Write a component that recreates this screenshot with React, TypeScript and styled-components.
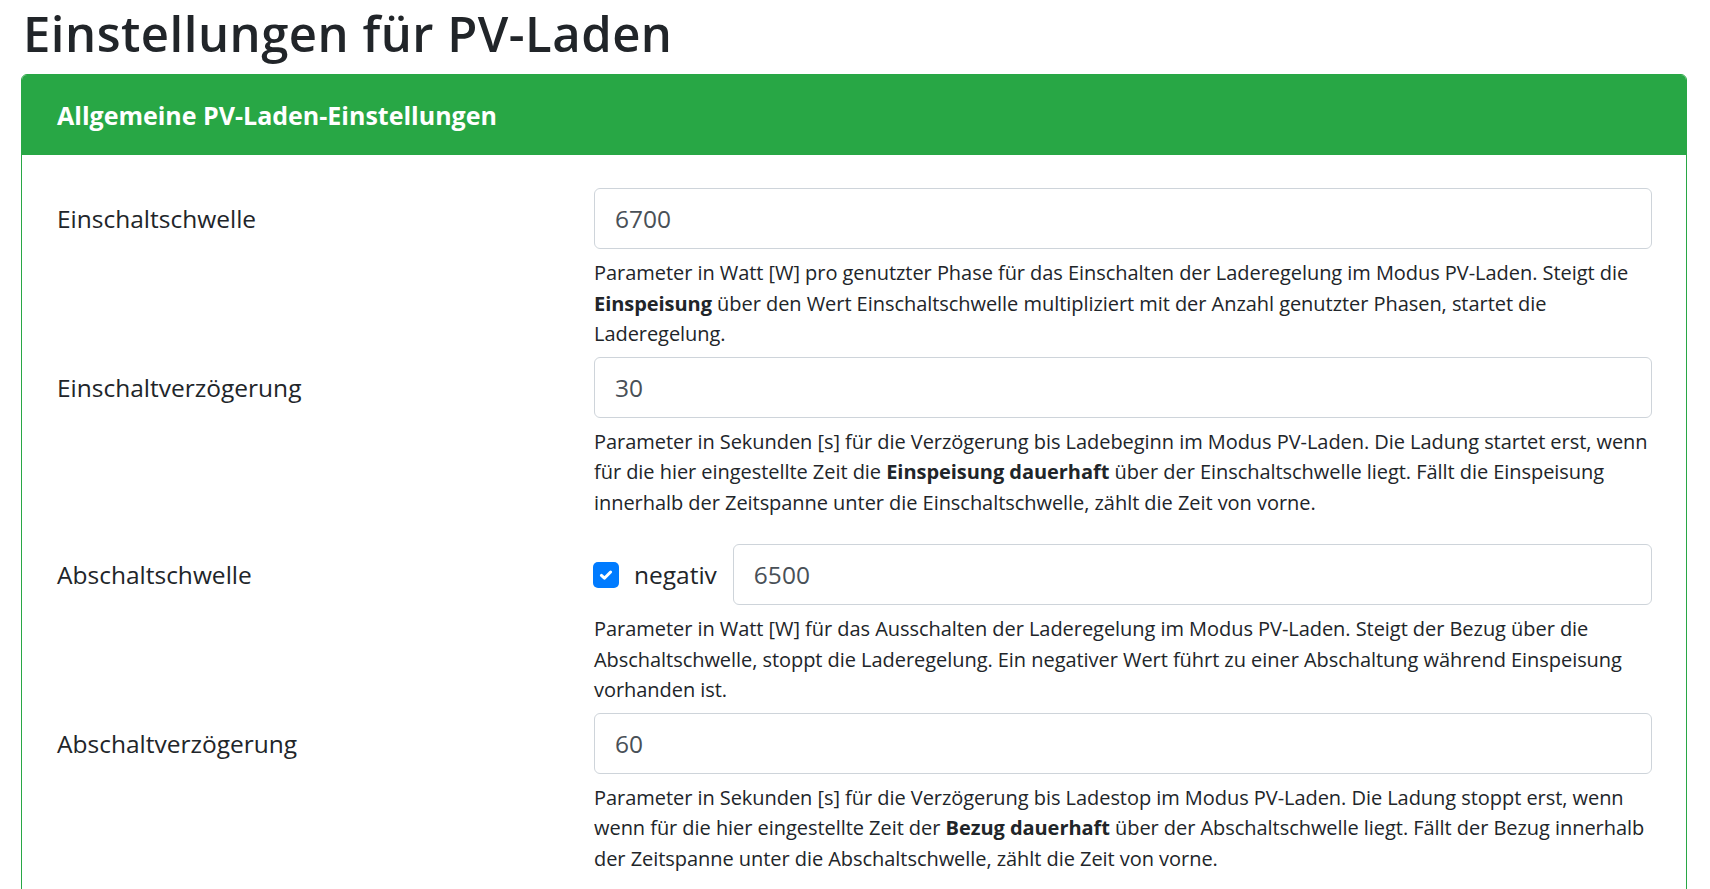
import React from "react";
import styled, { createGlobalStyle } from "styled-components";

const Global = createGlobalStyle`
  html, body { margin: 0; padding: 0; background: #fff; }
  body {
    font-family: "Open Sans", "Noto Sans", sans-serif;
    color: #212529;
    -webkit-font-smoothing: antialiased;
  }
  * { box-sizing: border-box; }
`;

const Page = styled.div`
  padding: 0 23px 0 21px;
`;

const Title = styled.h1`
  margin: 0;
  padding: 3px 0 0 2px;
  height: 74px;
  font-size: 49px;
  font-weight: 600;
  letter-spacing: 0.5px;
  line-height: 60px;
  color: #212529;
`;

const Card = styled.section`
  border: 1px solid #28a745;
  border-radius: 6px;
  overflow: hidden;
`;

const CardHeader = styled.header`
  height: 80px;
  background: #28a745;
  color: #fff;
  display: flex;
  align-items: center;
  padding: 0 35px;
  font-size: 25px;
  font-weight: 700;
`;

const CardBody = styled.div`
  padding: 33px 34px 40px 35px;
`;

const Row = styled.div<{ $extra?: number }>`
  display: grid;
  grid-template-columns: 537px 1fr;
  margin-bottom: ${(p) => 7 + (p.$extra ?? 0)}px;
`;

const Label = styled.label`
  height: 61px;
  display: flex;
  align-items: center;
  font-size: 24.5px;
  color: #212529;
`;

const Control = styled.div`
  display: flex;
  flex-direction: column;
`;

const InputLine = styled.div`
  display: flex;
  align-items: center;
  gap: 16px;
`;

const Input = styled.div`
  flex: 1 1 auto;
  min-width: 0;
  height: 61px;
  border: 1px solid #ced4da;
  border-radius: 6px;
  padding: 0 20px;
  display: flex;
  align-items: center;
  font-size: 24.5px;
  color: #495057;
`;

const Help = styled.p`
  margin: 9px 0 0;
  font-size: 20px;
  line-height: 30.5px;
  letter-spacing: -0.05px;
  color: #212529;
  b { font-weight: 700; }
`;

const CheckWrap = styled.label`
  display: flex;
  align-items: center;
  gap: 15px;
  font-size: 24.5px;
  color: #212529;
  margin-left: -1px;
`;

const CheckBox = styled.span`
  width: 26px;
  height: 26px;
  border-radius: 5px;
  background: #007bff;
  display: flex;
  align-items: center;
  justify-content: center;
`;

const Check = () => (
  <CheckBox>
    <svg width="16" height="16" viewBox="0 0 8 8">
      <path d="M1.7 4.2 L3.2 5.6 L6.3 2.5" fill="none" stroke="#fff" strokeWidth="1.5" strokeLinecap="round" strokeLinejoin="round" />
    </svg>
  </CheckBox>
);

export default function App() {
  return (
    <Page>
      <Global />
      <Title>Einstellungen für PV-Laden</Title>
      <Card>
        <CardHeader>Allgemeine PV-Laden-Einstellungen</CardHeader>
        <CardBody>
          <Row>
            <Label>Einschaltschwelle</Label>
            <Control>
              <Input>6700</Input>
              <Help>
                Parameter in Watt [W] pro genutzter Phase für das Einschalten der Laderegelung im Modus PV-Laden. Steigt die{" "}
                <b>Einspeisung</b> über den Wert Einschaltschwelle multipliziert mit der Anzahl genutzter Phasen, startet die Laderegelung.
              </Help>
            </Control>
          </Row>
          <Row $extra={19}>
            <Label>Einschaltverzögerung</Label>
            <Control>
              <Input>30</Input>
              <Help>
                Parameter in Sekunden [s] für die Verzögerung bis Ladebeginn im Modus PV-Laden. Die Ladung startet erst, wenn für die hier eingestellte Zeit die{" "}
                <b>Einspeisung dauerhaft</b> über der Einschaltschwelle liegt. Fällt die Einspeisung innerhalb der Zeitspanne unter die Einschaltschwelle, zählt die Zeit von vorne.
              </Help>
            </Control>
          </Row>
          <Row>
            <Label>Abschaltschwelle</Label>
            <Control>
              <InputLine>
                <CheckWrap>
                  <Check />
                  negativ
                </CheckWrap>
                <Input>6500</Input>
              </InputLine>
              <Help>
                Parameter in Watt [W] für das Ausschalten der Laderegelung im Modus PV-Laden. Steigt der Bezug über die Abschaltschwelle, stoppt die Laderegelung. Ein negativer Wert führt zu einer Abschaltung während Einspeisung vorhanden ist.
              </Help>
            </Control>
          </Row>
          <Row>
            <Label>Abschaltverzögerung</Label>
            <Control>
              <Input>60</Input>
              <Help>
                Parameter in Sekunden [s] für die Verzögerung bis Ladestop im Modus PV-Laden. Die Ladung stoppt erst, wenn wenn für die hier eingestellte Zeit der{" "}
                <b>Bezug dauerhaft</b> über der Abschaltschwelle liegt. Fällt der Bezug innerhalb der Zeitspanne unter die Abschaltschwelle, zählt die Zeit von vorne.
              </Help>
            </Control>
          </Row>
        </CardBody>
      </Card>
    </Page>
  );
}
